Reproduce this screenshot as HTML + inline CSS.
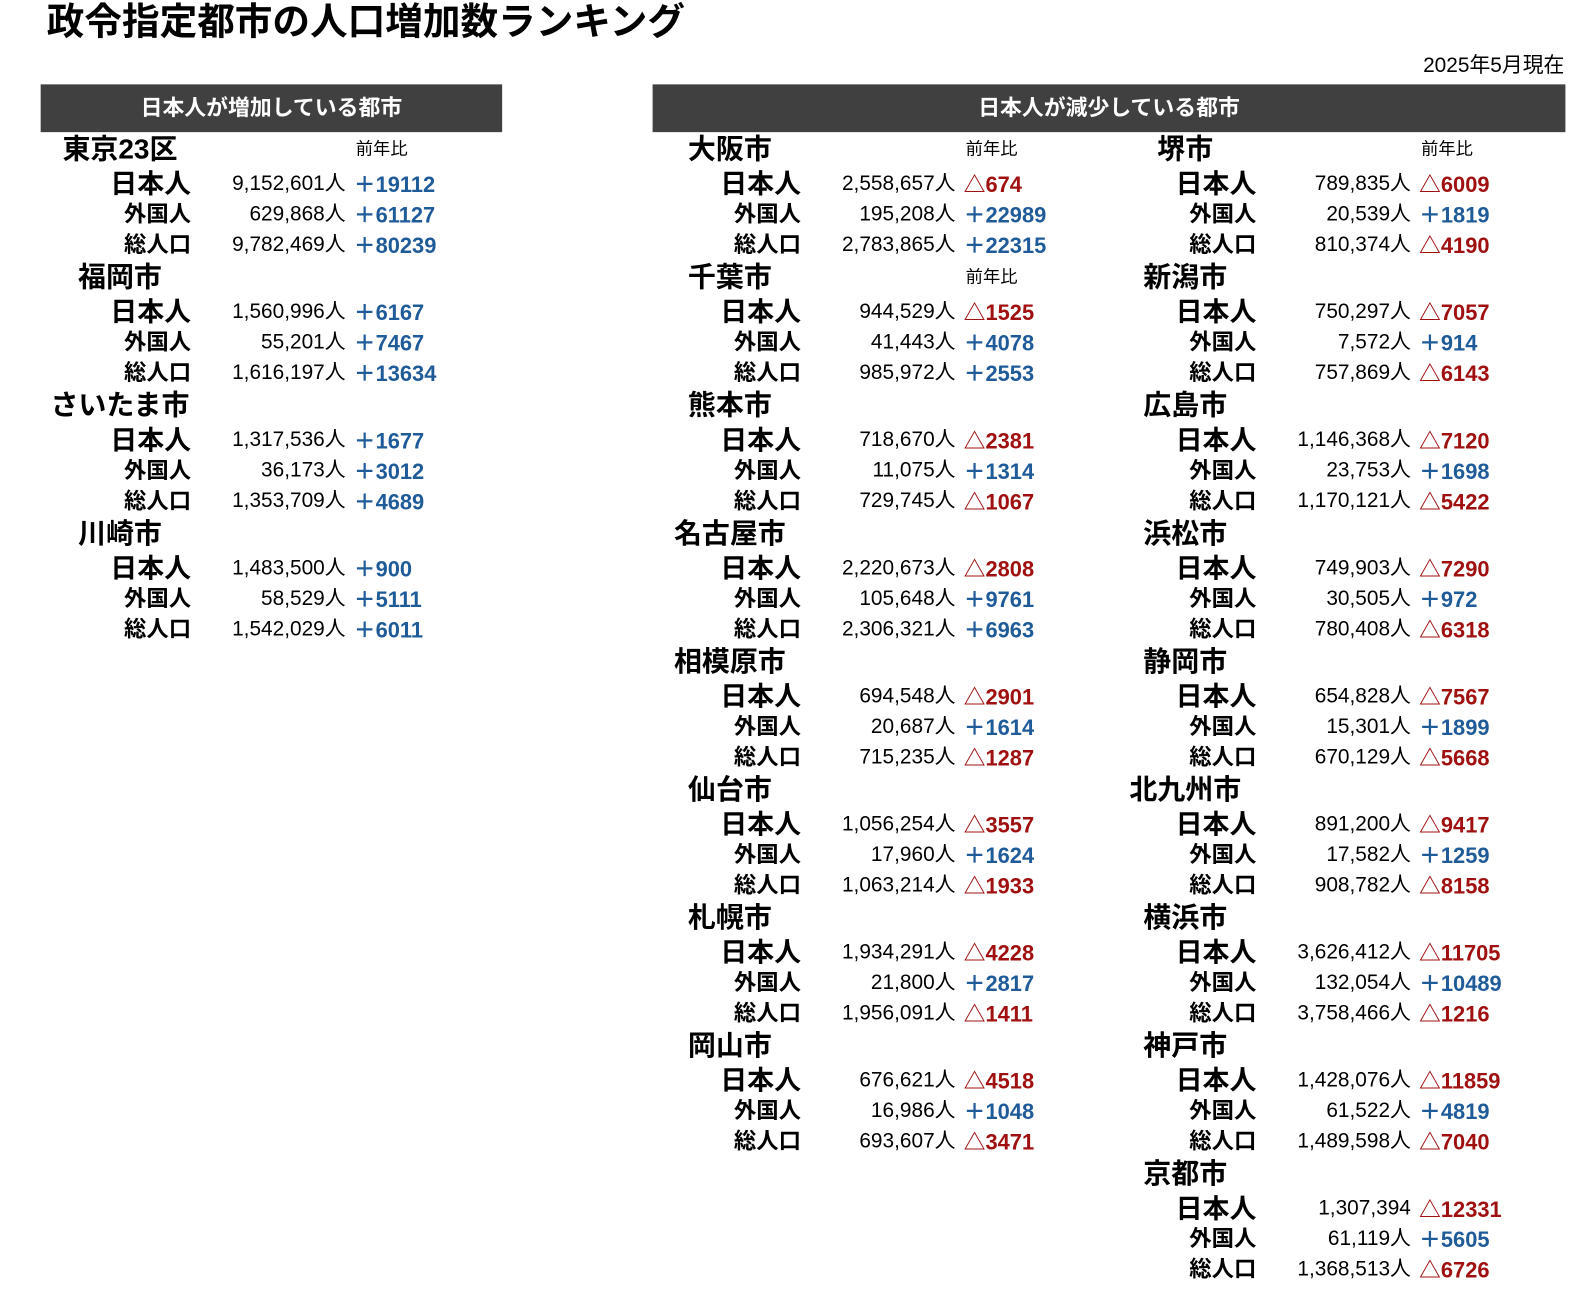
<!DOCTYPE html>
<html><head><meta charset="utf-8"><style>
body{margin:0;width:1595px;height:1310px;background:#fff;position:relative;overflow:hidden;font-family:"Liberation Sans","Noto Sans CJK JP",sans-serif;color:#000}
#w{position:absolute;left:0;top:0;width:1570px;height:1290px;transform:scale(1.0165);transform-origin:0 0}
.t{position:absolute;left:46px;top:0;font-size:37px;font-weight:bold;line-height:44px;white-space:nowrap}
.dt{position:absolute;right:31px;top:52px;font-size:20.5px;line-height:26px}
.h{position:absolute;top:83px;height:47px;background:#404040;color:#fff;font-weight:bold;font-size:21.5px;line-height:47px;text-align:center}
.b{position:absolute;width:460px;height:120px}
.c{position:absolute;left:-20px;top:-18px;width:196px;text-align:center;font-size:27.5px;font-weight:bold;line-height:36px;white-space:nowrap}
.p{position:absolute;left:310px;top:-12px;font-size:17px;line-height:24px}
.r{position:absolute;left:0;width:480px;height:30px;line-height:30px;white-space:nowrap}
.r1{top:19px}.r2{top:49px}.r3{top:79px}
.l{position:absolute;left:0;width:148px;text-align:right;font-weight:bold;font-size:22px}
.r1 .l{font-size:26.5px}
.n{position:absolute;left:100px;width:200px;text-align:right;font-size:20.5px}
.d{position:absolute;left:308px;font-weight:bold;font-size:21.5px;top:1px}
.u{color:#1f5b99}.m{color:#a01010}
</style></head><body><div id="w">
<div class="t">政令指定都市の人口増加数ランキング</div>
<div class="dt">2025年5月現在</div>
<div class="h" style="left:40px;width:454px">日本人が増加している都市</div>
<div class="h" style="left:642px;width:898px">日本人が減少している都市</div>

<div class="b" style="left:40px;top:147px"><div class="c">東京23区</div><div class="p">前年比</div>
<div class="r r1"><span class="l">日本人</span><span class="n">9,152,601人</span><span class="d u">＋19112</span></div>
<div class="r r2"><span class="l">外国人</span><span class="n">629,868人</span><span class="d u">＋61127</span></div>
<div class="r r3"><span class="l">総人口</span><span class="n">9,782,469人</span><span class="d u">＋80239</span></div></div>
<div class="b" style="left:40px;top:273px"><div class="c">福岡市</div>
<div class="r r1"><span class="l">日本人</span><span class="n">1,560,996人</span><span class="d u">＋6167</span></div>
<div class="r r2"><span class="l">外国人</span><span class="n">55,201人</span><span class="d u">＋7467</span></div>
<div class="r r3"><span class="l">総人口</span><span class="n">1,616,197人</span><span class="d u">＋13634</span></div></div>
<div class="b" style="left:40px;top:399px"><div class="c">さいたま市</div>
<div class="r r1"><span class="l">日本人</span><span class="n">1,317,536人</span><span class="d u">＋1677</span></div>
<div class="r r2"><span class="l">外国人</span><span class="n">36,173人</span><span class="d u">＋3012</span></div>
<div class="r r3"><span class="l">総人口</span><span class="n">1,353,709人</span><span class="d u">＋4689</span></div></div>
<div class="b" style="left:40px;top:525px"><div class="c">川崎市</div>
<div class="r r1"><span class="l">日本人</span><span class="n">1,483,500人</span><span class="d u">＋900</span></div>
<div class="r r2"><span class="l">外国人</span><span class="n">58,529人</span><span class="d u">＋5111</span></div>
<div class="r r3"><span class="l">総人口</span><span class="n">1,542,029人</span><span class="d u">＋6011</span></div></div>

<div class="b" style="left:640px;top:147px"><div class="c">大阪市</div><div class="p">前年比</div>
<div class="r r1"><span class="l">日本人</span><span class="n">2,558,657人</span><span class="d m">△674</span></div>
<div class="r r2"><span class="l">外国人</span><span class="n">195,208人</span><span class="d u">＋22989</span></div>
<div class="r r3"><span class="l">総人口</span><span class="n">2,783,865人</span><span class="d u">＋22315</span></div></div>
<div class="b" style="left:640px;top:273px"><div class="c">千葉市</div><div class="p">前年比</div>
<div class="r r1"><span class="l">日本人</span><span class="n">944,529人</span><span class="d m">△1525</span></div>
<div class="r r2"><span class="l">外国人</span><span class="n">41,443人</span><span class="d u">＋4078</span></div>
<div class="r r3"><span class="l">総人口</span><span class="n">985,972人</span><span class="d u">＋2553</span></div></div>
<div class="b" style="left:640px;top:399px"><div class="c">熊本市</div>
<div class="r r1"><span class="l">日本人</span><span class="n">718,670人</span><span class="d m">△2381</span></div>
<div class="r r2"><span class="l">外国人</span><span class="n">11,075人</span><span class="d u">＋1314</span></div>
<div class="r r3"><span class="l">総人口</span><span class="n">729,745人</span><span class="d m">△1067</span></div></div>
<div class="b" style="left:640px;top:525px"><div class="c">名古屋市</div>
<div class="r r1"><span class="l">日本人</span><span class="n">2,220,673人</span><span class="d m">△2808</span></div>
<div class="r r2"><span class="l">外国人</span><span class="n">105,648人</span><span class="d u">＋9761</span></div>
<div class="r r3"><span class="l">総人口</span><span class="n">2,306,321人</span><span class="d u">＋6963</span></div></div>
<div class="b" style="left:640px;top:651px"><div class="c">相模原市</div>
<div class="r r1"><span class="l">日本人</span><span class="n">694,548人</span><span class="d m">△2901</span></div>
<div class="r r2"><span class="l">外国人</span><span class="n">20,687人</span><span class="d u">＋1614</span></div>
<div class="r r3"><span class="l">総人口</span><span class="n">715,235人</span><span class="d m">△1287</span></div></div>
<div class="b" style="left:640px;top:777px"><div class="c">仙台市</div>
<div class="r r1"><span class="l">日本人</span><span class="n">1,056,254人</span><span class="d m">△3557</span></div>
<div class="r r2"><span class="l">外国人</span><span class="n">17,960人</span><span class="d u">＋1624</span></div>
<div class="r r3"><span class="l">総人口</span><span class="n">1,063,214人</span><span class="d m">△1933</span></div></div>
<div class="b" style="left:640px;top:903px"><div class="c">札幌市</div>
<div class="r r1"><span class="l">日本人</span><span class="n">1,934,291人</span><span class="d m">△4228</span></div>
<div class="r r2"><span class="l">外国人</span><span class="n">21,800人</span><span class="d u">＋2817</span></div>
<div class="r r3"><span class="l">総人口</span><span class="n">1,956,091人</span><span class="d m">△1411</span></div></div>
<div class="b" style="left:640px;top:1029px"><div class="c">岡山市</div>
<div class="r r1"><span class="l">日本人</span><span class="n">676,621人</span><span class="d m">△4518</span></div>
<div class="r r2"><span class="l">外国人</span><span class="n">16,986人</span><span class="d u">＋1048</span></div>
<div class="r r3"><span class="l">総人口</span><span class="n">693,607人</span><span class="d m">△3471</span></div></div>

<div class="b" style="left:1088px;top:147px"><div class="c">堺市</div><div class="p">前年比</div>
<div class="r r1"><span class="l">日本人</span><span class="n">789,835人</span><span class="d m">△6009</span></div>
<div class="r r2"><span class="l">外国人</span><span class="n">20,539人</span><span class="d u">＋1819</span></div>
<div class="r r3"><span class="l">総人口</span><span class="n">810,374人</span><span class="d m">△4190</span></div></div>
<div class="b" style="left:1088px;top:273px"><div class="c">新潟市</div>
<div class="r r1"><span class="l">日本人</span><span class="n">750,297人</span><span class="d m">△7057</span></div>
<div class="r r2"><span class="l">外国人</span><span class="n">7,572人</span><span class="d u">＋914</span></div>
<div class="r r3"><span class="l">総人口</span><span class="n">757,869人</span><span class="d m">△6143</span></div></div>
<div class="b" style="left:1088px;top:399px"><div class="c">広島市</div>
<div class="r r1"><span class="l">日本人</span><span class="n">1,146,368人</span><span class="d m">△7120</span></div>
<div class="r r2"><span class="l">外国人</span><span class="n">23,753人</span><span class="d u">＋1698</span></div>
<div class="r r3"><span class="l">総人口</span><span class="n">1,170,121人</span><span class="d m">△5422</span></div></div>
<div class="b" style="left:1088px;top:525px"><div class="c">浜松市</div>
<div class="r r1"><span class="l">日本人</span><span class="n">749,903人</span><span class="d m">△7290</span></div>
<div class="r r2"><span class="l">外国人</span><span class="n">30,505人</span><span class="d u">＋972</span></div>
<div class="r r3"><span class="l">総人口</span><span class="n">780,408人</span><span class="d m">△6318</span></div></div>
<div class="b" style="left:1088px;top:651px"><div class="c">静岡市</div>
<div class="r r1"><span class="l">日本人</span><span class="n">654,828人</span><span class="d m">△7567</span></div>
<div class="r r2"><span class="l">外国人</span><span class="n">15,301人</span><span class="d u">＋1899</span></div>
<div class="r r3"><span class="l">総人口</span><span class="n">670,129人</span><span class="d m">△5668</span></div></div>
<div class="b" style="left:1088px;top:777px"><div class="c">北九州市</div>
<div class="r r1"><span class="l">日本人</span><span class="n">891,200人</span><span class="d m">△9417</span></div>
<div class="r r2"><span class="l">外国人</span><span class="n">17,582人</span><span class="d u">＋1259</span></div>
<div class="r r3"><span class="l">総人口</span><span class="n">908,782人</span><span class="d m">△8158</span></div></div>
<div class="b" style="left:1088px;top:903px"><div class="c">横浜市</div>
<div class="r r1"><span class="l">日本人</span><span class="n">3,626,412人</span><span class="d m">△11705</span></div>
<div class="r r2"><span class="l">外国人</span><span class="n">132,054人</span><span class="d u">＋10489</span></div>
<div class="r r3"><span class="l">総人口</span><span class="n">3,758,466人</span><span class="d m">△1216</span></div></div>
<div class="b" style="left:1088px;top:1029px"><div class="c">神戸市</div>
<div class="r r1"><span class="l">日本人</span><span class="n">1,428,076人</span><span class="d m">△11859</span></div>
<div class="r r2"><span class="l">外国人</span><span class="n">61,522人</span><span class="d u">＋4819</span></div>
<div class="r r3"><span class="l">総人口</span><span class="n">1,489,598人</span><span class="d m">△7040</span></div></div>
<div class="b" style="left:1088px;top:1155px"><div class="c">京都市</div>
<div class="r r1"><span class="l">日本人</span><span class="n">1,307,394</span><span class="d m">△12331</span></div>
<div class="r r2"><span class="l">外国人</span><span class="n">61,119人</span><span class="d u">＋5605</span></div>
<div class="r r3"><span class="l">総人口</span><span class="n">1,368,513人</span><span class="d m">△6726</span></div></div>
</div></body></html>
